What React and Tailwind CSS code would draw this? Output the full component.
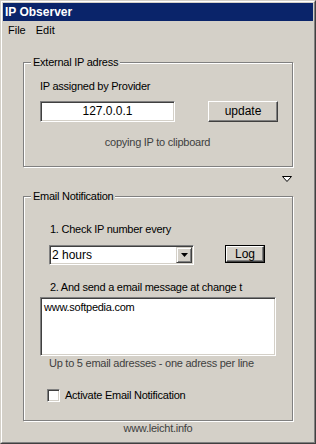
import React from "react";

const font = { fontFamily: '"Liberation Sans", Arial, sans-serif' };

function Group({ label, className, children }) {
  return (
    <div
      className={`relative mx-[20px] border border-[#808080] shadow-[inset_1px_1px_0_#fff,1px_1px_0_#fff] ${className}`}
    >
      <span className="absolute left-[7px] top-[-7px] bg-[#d4d0c8] px-[2px] text-[11px] leading-[13px] tracking-[-0.25px] text-black">
        {label}
      </span>
      {children}
    </div>
  );
}

function Button({ children, isDefault, className }) {
  const inner = (
    <div className="flex h-full w-full items-center justify-center border border-t-white border-l-white border-r-[#404040] border-b-[#404040] bg-[#d4d0c8] text-[12px] leading-[13px] text-black shadow-[inset_-1px_-1px_0_#808080]">
      {children}
    </div>
  );
  if (isDefault) {
    return <div className={`border border-black ${className}`}>{inner}</div>;
  }
  return <div className={className}>{inner}</div>;
}

export default function App() {
  return (
    <div style={font} className="h-[444px] w-[316px] select-none border border-t-[#d4d0c8] border-l-[#d4d0c8] border-r-[#404040] border-b-[#404040]">
      <div className="flex h-full flex-col border border-t-white border-l-white border-r-[#808080] border-b-[#808080] bg-[#d4d0c8] p-px">
        {/* title bar */}
        <div className="flex h-[18px] items-center bg-[#0a246a] pl-[2px] text-[12px] font-bold leading-[18px] text-white">
          IP Observer
        </div>

        {/* menu */}
        <div className="flex h-[18px] items-center text-[11px] leading-[13px] text-black">
          <span className="px-[5px]">File</span>
          <span className="px-[5px]">Edit</span>
        </div>

        <div className="flex flex-col text-[11px] leading-[13px] tracking-[-0.25px]">
          <Group label="External IP adress" className="mt-[23px] h-[105px]">
            <div className="flex flex-col pl-[16px] pt-[17px]">
              <div className="text-black">IP assigned by Provider</div>
              <div className="mt-[8px] flex items-start tracking-normal">
                <div className="flex h-[21px] w-[135px] items-center justify-center border border-t-[#808080] border-l-[#808080] border-r-white border-b-white bg-white text-[12px] leading-[13px] text-black shadow-[inset_1px_1px_0_#404040,inset_-1px_-1px_0_#d4d0c8]">
                  127.0.0.1
                </div>
                <Button className="ml-[33px] h-[21px] w-[70px]">update</Button>
              </div>
            </div>
            <div className="mt-[14px] pr-[1px] text-center text-[#404040]">
              copying IP to clipboard
            </div>
          </Group>

          <div className="flex h-[29px] justify-end pr-[21px] pt-[9px]">
            <svg width="10" height="6" viewBox="0 0 10 6">
              <polygon points="0.5,0.5 9.5,0.5 5,5.5" fill="#fff" stroke="#000" strokeWidth="1" />
            </svg>
          </div>

          <Group label="Email Notification" className="h-[225px]">
            <div className="flex flex-col pl-[16px]">
              <div className="pl-[10px] pt-[26px] text-black">
                1. Check IP number every
              </div>
              <div className="mt-[9px] flex items-start pl-[9px] tracking-normal">
                <div className="flex h-[20px] w-[145px] items-center border border-t-[#808080] border-l-[#808080] border-r-white border-b-white bg-white shadow-[inset_1px_1px_0_#404040,inset_-1px_-1px_0_#d4d0c8]">
                  <span className="flex-1 pl-[2px] text-[12px] leading-[13px] text-black">2 hours</span>
                  <div className="mr-[1px] flex h-[16px] w-[16px] items-center justify-center border border-t-[#d4d0c8] border-l-[#d4d0c8] border-r-[#404040] border-b-[#404040] bg-[#d4d0c8] shadow-[inset_1px_1px_0_#fff,inset_-1px_-1px_0_#808080]">
                    <svg width="7" height="4" viewBox="0 0 7 4">
                      <polygon points="0,0 7,0 3.5,4" fill="#000" />
                    </svg>
                  </div>
                </div>
                <Button isDefault className="ml-[31px] h-[18px] w-[40px]">Log</Button>
              </div>
              <div className="mt-[16px] whitespace-nowrap pl-[10px] text-black">
                2. And send a email message at change t
              </div>
              <div className="mt-[3px] h-[59px] w-[236px] border border-t-[#808080] border-l-[#808080] border-r-white border-b-white bg-white pl-[3px] pt-[3px] text-black shadow-[inset_1px_1px_0_#404040,inset_-1px_-1px_0_#d4d0c8]">
                www.softpedia.com
              </div>
              <div className="mt-[1px] pl-[9px] text-[#404040]">
                Up to 5 email adresses - one adress per line
              </div>
              <div className="mt-[19px] flex items-center pl-[7px]">
                <div className="h-[13px] w-[13px] border border-t-[#808080] border-l-[#808080] border-r-white border-b-white bg-white shadow-[inset_1px_1px_0_#404040,inset_-1px_-1px_0_#d4d0c8]" />
                <span className="ml-[5px] text-black">Activate Email Notification</span>
              </div>
            </div>
          </Group>

          <div className="mt-[1px] text-center text-[#404040]">
            www.leicht.info
          </div>
        </div>
      </div>
    </div>
  );
}
